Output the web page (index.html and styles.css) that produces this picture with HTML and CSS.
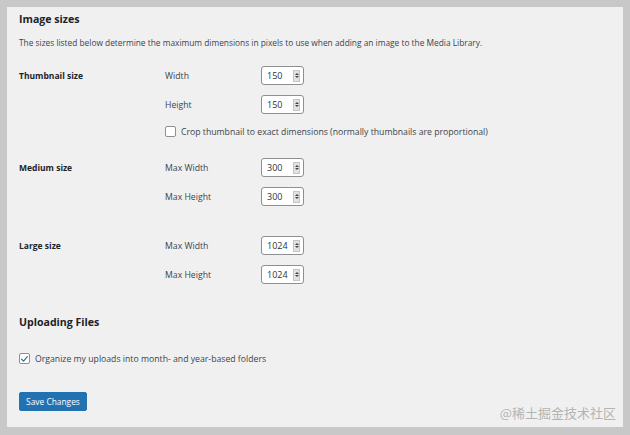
FILE: index.html
```html
<!DOCTYPE html>
<html lang="en">
<head>
<meta charset="utf-8">
<title>Media Settings</title>
<link rel="stylesheet" href="styles.css">
</head>
<body>
<div class="frame">
  <div class="panel">
    <h2 class="title title-first">Image sizes</h2>
    <p class="desc">The sizes listed below determine the maximum dimensions in pixels to use when adding an image to the Media Library.</p>

    <div class="section sec-thumb">
      <div class="th">Thumbnail size</div>
      <div class="fields">
        <div class="row"><span class="flabel">Width</span><span class="numbox"><span class="val">150</span><span class="spin"><i class="up"></i><i class="down"></i></span></span></div>
        <div class="row"><span class="flabel">Height</span><span class="numbox"><span class="val">150</span><span class="spin"><i class="up"></i><i class="down"></i></span></span></div>
        <div class="row row-check"><span class="cb"></span><span class="cblabel">Crop thumbnail to exact dimensions (normally thumbnails are proportional)</span></div>
      </div>
    </div>

    <div class="section sec-medium">
      <div class="th">Medium size</div>
      <div class="fields">
        <div class="row"><span class="flabel">Max Width</span><span class="numbox"><span class="val">300</span><span class="spin"><i class="up"></i><i class="down"></i></span></span></div>
        <div class="row"><span class="flabel">Max Height</span><span class="numbox"><span class="val">300</span><span class="spin"><i class="up"></i><i class="down"></i></span></span></div>
      </div>
    </div>

    <div class="section sec-large">
      <div class="th">Large size</div>
      <div class="fields">
        <div class="row"><span class="flabel">Max Width</span><span class="numbox"><span class="val">1024</span><span class="spin"><i class="up"></i><i class="down"></i></span></span></div>
        <div class="row"><span class="flabel">Max Height</span><span class="numbox"><span class="val">1024</span><span class="spin"><i class="up"></i><i class="down"></i></span></span></div>
      </div>
    </div>

    <h2 class="title title-upload">Uploading Files</h2>
    <div class="row row-organize">
      <span class="cb cb-checked"><svg viewBox="0 0 12 12" width="10" height="10"><path d="M2.2 6.3 L4.8 8.9 L9.8 2.8" fill="none" stroke="#3a6f93" stroke-width="1.6" stroke-linecap="round" stroke-linejoin="round"/></svg></span>
      <span class="cblabel">Organize my uploads into month- and year-based folders</span>
    </div>

    <div class="actions"><span class="button">Save Changes</span></div>

    <div class="watermark">@稀土掘金技术社区</div>
  </div>
</div>
</body>
</html>
```

FILE: styles.css
```css
html, body {
  margin: 0;
  padding: 0;
}
body {
  background: #c8c8c8;
  font-family: "Open Sans", "Noto Sans", sans-serif;
  color: #3c434a;
}
.frame {
  width: 630px;
  height: 435px;
  box-sizing: border-box;
  padding: 7px;
  background: #c8c8c8;
}
.panel {
  position: relative;
  width: 616px;
  height: 420px;
  box-sizing: border-box;
  background: #f0f0f1;
  padding: 0 0 0 12px;
  overflow: hidden;
}
.title {
  margin: 0;
  font-size: 10.6px;
  line-height: 16px;
  font-weight: 700;
  color: #1d2327;
}
.title-first {
  padding-top: 4px;
}
.desc {
  margin: 10px 0 0 0;
  font-size: 8.35px;
  line-height: 12px;
  color: #3c434a;
  white-space: nowrap;
}
.section {
  display: flex;
}
.sec-thumb { margin-top: 17px; }
.sec-medium { margin-top: 17px; }
.sec-large { margin-top: 30px; }
.th {
  width: 146px;
  flex: none;
  font-size: 8.5px;
  line-height: 19px;
  font-weight: 700;
  color: #1d2327;
}
.fields {
  display: flex;
  flex-direction: column;
  gap: 10px;
}
.row {
  display: flex;
  align-items: center;
  height: 19px;
  font-size: 8.7px;
}
.row-check {
  margin-top: -2px;
}
.flabel {
  width: 96px;
  flex: none;
  color: #3c434a;
}
.numbox {
  width: 43px;
  height: 19px;
  box-sizing: border-box;
  border: 1px solid #8c8f94;
  border-radius: 3px;
  background: #fff;
  display: flex;
  align-items: center;
  justify-content: space-between;
  padding: 0 3px 0 5px;
  color: #2c3338;
  font-size: 9px;
}
.spin {
  width: 7px;
  height: 12px;
  background: #e2e2e2;
  border: 1px solid #c4c4c4;
  box-sizing: border-box;
  display: flex;
  flex-direction: column;
  align-items: center;
  justify-content: center;
  gap: 1px;
}
.spin i {
  display: block;
  width: 0;
  height: 0;
  border-left: 2px solid transparent;
  border-right: 2px solid transparent;
}
.spin .up { border-bottom: 2.5px solid #444; }
.spin .down { border-top: 2.5px solid #444; }
.cb {
  width: 11px;
  height: 11px;
  flex: none;
  box-sizing: border-box;
  border: 1px solid #8c8f94;
  border-radius: 2px;
  background: #fff;
  display: flex;
  align-items: center;
  justify-content: center;
  margin-right: 5px;
}
.cblabel {
  color: #3c434a;
  white-space: nowrap;
}
.title-upload {
  margin-top: 30px;
}
.row-organize {
  margin-top: 19px;
}
.actions {
  margin-top: 24px;
  display: flex;
}
.button {
  display: flex;
  align-items: center;
  justify-content: center;
  width: 68px;
  height: 19px;
  box-sizing: border-box;
  background: #2271b1;
  border: 1px solid #2271b1;
  border-radius: 2px;
  color: #fff;
  font-size: 8.4px;
}
.watermark {
  position: absolute;
  right: 7px;
  bottom: 6px;
  font-family: "Noto Sans CJK SC", sans-serif;
  font-size: 13px;
  line-height: 16px;
  color: #b4b4b4;
}
```
